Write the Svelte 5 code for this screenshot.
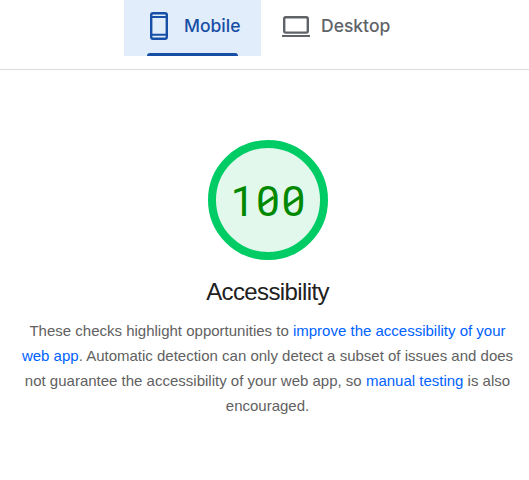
<script>
  const digits = ['1', '0', '0'];
</script>

<main>
  <nav>
    <button class="tab active">
      <svg width="20" height="28" viewBox="0 0 20 28" fill="none" stroke="currentColor" stroke-width="2.4">
        <rect x="2.2" y="1.2" width="15.6" height="25.6" rx="1.8" />
        <path d="M2 4.9h16M2 22.8h16" stroke-width="2" />
      </svg>
      <span class="label">Mobile</span>
      <span class="bar"></span>
    </button>
    <button class="tab">
      <svg width="28" height="22" viewBox="0 0 28 22" fill="none" stroke="currentColor" stroke-width="2.4">
        <rect x="2.2" y="2.2" width="23.6" height="15.4" rx="1.5" />
        <path d="M0 21h28" stroke-width="2" />
      </svg>
      <span class="label">Desktop</span>
    </button>
  </nav>
  <section>
    <div class="gauge">
      {#each digits as digit}<span class:zero={digit === '0'}>{digit}</span>{/each}
    </div>
    <h1>Accessibility</h1>
    <p>
      These checks highlight opportunities to <a href="#improve">improve the accessibility of your<br />web app</a>. Automatic detection can only detect a subset of issues and does<br />not guarantee the accessibility of your web app, so <a href="#manual">manual testing</a> is also<br />encouraged.
    </p>
  </section>
</main>

<style>
  :global(body) { margin: 0; background: #fff; overflow: hidden; }
  main { width: 529px; height: 480px; font-family: "Liberation Sans", Arial, sans-serif; }
  nav { box-sizing: border-box; height: 70px; border-bottom: 1px solid #dadce0; padding-left: 124px; display: flex; }
  .tab { box-sizing: border-box; position: relative; border: 0; margin: 0; background: none; color: #5f6368; height: 56px; padding: 0 0 4px 21px; display: flex; align-items: center; gap: 11px; font: 550 17.5px Inter, sans-serif; }
  .tab.active { width: 137px; padding-left: 25px; gap: 15px; color: #174ea6; background: #e1edfb; }
  .label { white-space: nowrap; padding-bottom: 2px; }
  svg { flex: none; }
  .bar { position: absolute; left: 23px; bottom: 0; width: 91px; height: 3px; background: #174ea6; border-radius: 3px 3px 0 0; }
  section { padding: 70px 0 0 6px; display: flex; flex-direction: column; align-items: center; }
  .gauge { box-sizing: border-box; width: 120px; height: 120px; border: 8px solid #0c6; border-radius: 50%; background: #e3f8ed; color: #080; display: flex; align-items: center; justify-content: center; padding: 3px 0 0 1px; font: 400 42.5px/50px Roboto, sans-serif; }
  .gauge span { position: relative; width: 25.4px; display: flex; justify-content: center; }
  /* Diagonal stroke inside each zero */
  .zero::after { content: ""; position: absolute; left: 5px; top: 23px; width: 15px; height: 3.4px; background: #080; transform: rotate(-34deg); }
  h1 { margin: 17px 0 0; font-size: 24px; line-height: 30px; font-weight: 400; color: #212121; letter-spacing: -.62px; }
  p { margin: 11px 0 0; font-size: 15px; line-height: 25px; color: #616161; text-align: center; white-space: nowrap; }
  a { color: #0062ff; text-decoration: none; }
</style>
